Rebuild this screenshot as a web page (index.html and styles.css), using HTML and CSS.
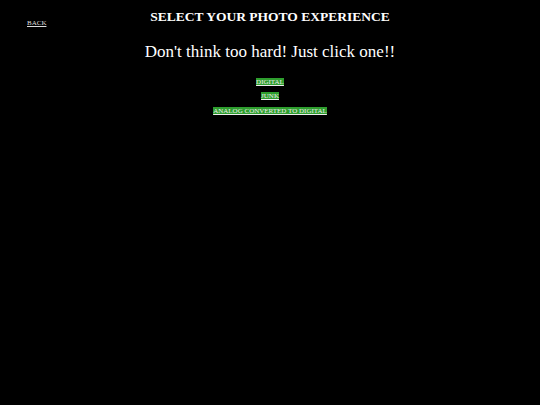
FILE: index.html
```html
<!DOCTYPE html>
<html>
<head>
<meta charset="utf-8">
<link rel="stylesheet" href="styles.css">
</head>
<body>
<header class="top">
  <a class="back" href="#">BACK</a>
  <h1 class="title">SELECT YOUR PHOTO EXPERIENCE</h1>
</header>
<p class="sub">Don't think too hard! Just click one!!</p>
<nav class="choices">
  <a class="choice" href="#">DIGITAL</a>
  <a class="choice" href="#">JUNK</a>
  <a class="choice" href="#">ANALOG CONVERTED TO DIGITAL</a>
</nav>
</body>
</html>
```
FILE: styles.css
```css
html, body {
  margin: 0;
  padding: 0;
  background: #000;
  color: #fff;
  font-family: "Liberation Serif", "Times New Roman", serif;
}
.top {
  position: relative;
  padding-top: 9px;
}
.back {
  position: absolute;
  left: 27px;
  top: 19px;
  font-size: 7px;
  color: #ddd;
}
.title {
  margin: 0;
  text-align: center;
  font-size: 13.5px;
  font-weight: bold;
  line-height: 15px;
}
.sub {
  margin: 18px 0 0;
  text-align: center;
  font-size: 17px;
  line-height: 20px;
}
.choices {
  display: flex;
  flex-direction: column;
  align-items: center;
  gap: 6.5px;
  margin-top: 15.5px;
}
.choice {
  font-size: 7px;
  line-height: 8px;
  color: #eee;
  background: #2e9e2e;
  padding: 0;
}
```
